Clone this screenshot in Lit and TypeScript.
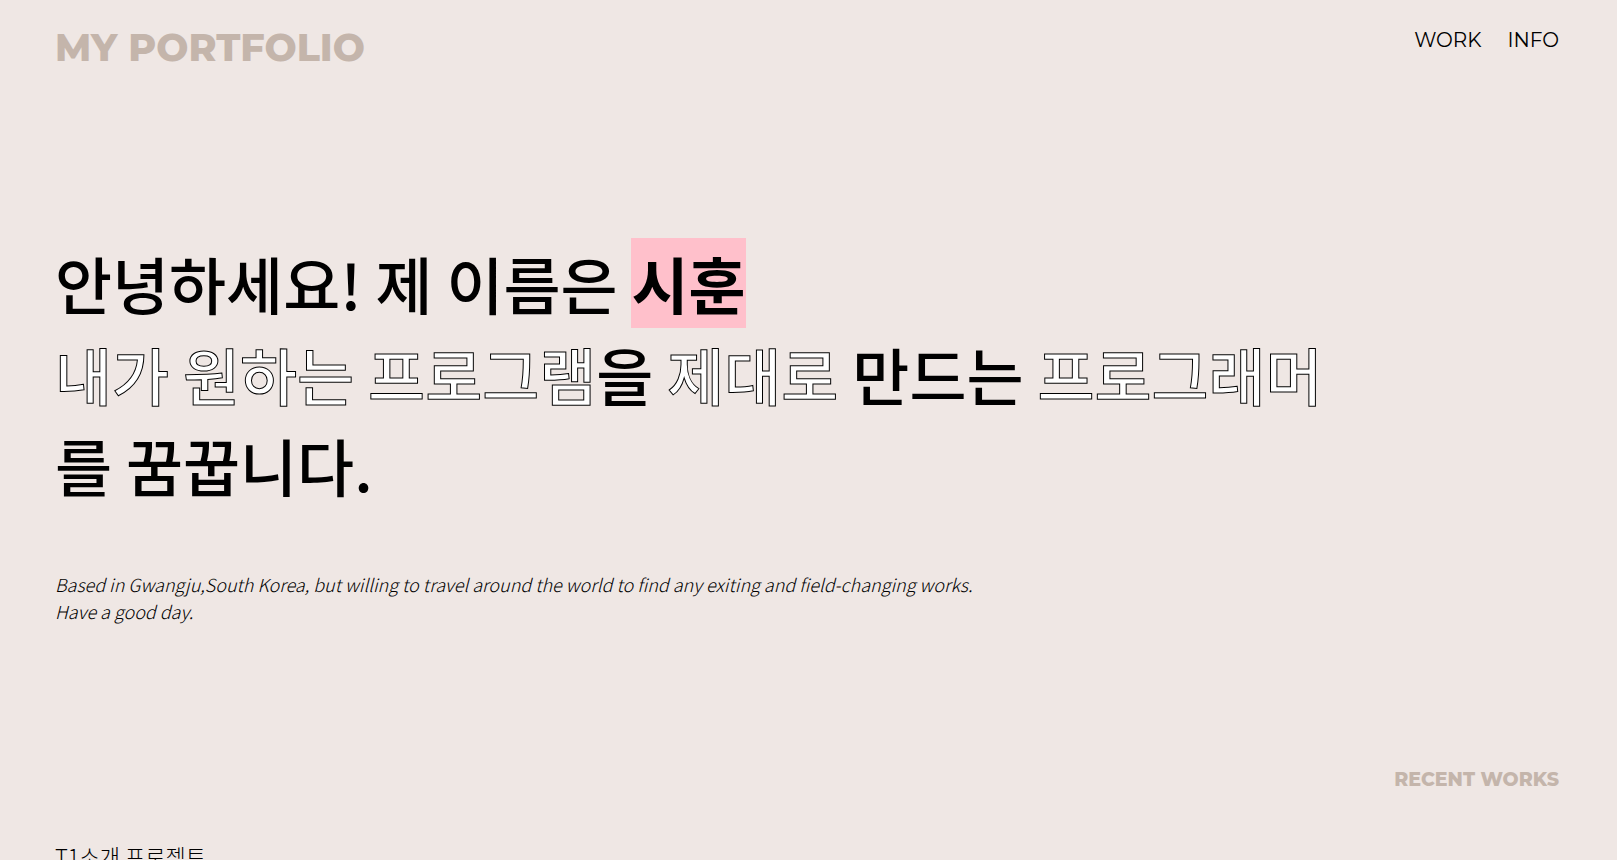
import { LitElement, html, css } from "lit";
import { customElement } from "lit/decorators.js";

@customElement("app-root")
class AppRoot extends LitElement {
  static styles = css`
    :host {
      display: block;
      height: 100vh;
      overflow: hidden;
      background: #efe7e4;
      color: #000;
      font-family: "Noto Sans CJK KR", sans-serif;
    }
    a { color: inherit; text-decoration: none; }
    h1, h2, h3, p { margin: 0; }
    header {
      display: flex;
      justify-content: space-between;
      align-items: flex-start;
      padding: 24px 58px 0 55px;
      font-family: Montserrat, Inter, sans-serif;
    }
    .logo { font-size: 38px; line-height: 48px; font-weight: 800; color: #c4b5ab; }
    nav { display: flex; gap: 26px; font-size: 20px; line-height: 32px; }
    .intro { padding: 166px 55px 0; }
    .headline { font-size: 62px; line-height: 91px; font-weight: 500; }
    mark { background: pink; color: inherit; font-weight: 700; }
    .outline { color: #fff; -webkit-text-stroke: 1px #000; }
    .lead { margin-top: 60px; font-size: 18px; line-height: 27px; font-weight: 300; font-style: italic; }
    .section-title { padding: 143px 58px 0; text-align: right; font: 800 19px/24px Montserrat, Inter, sans-serif; color: #c4b5ab; }
    .project { padding: 48px 55px 0; font-size: 22px; line-height: 30px; font-weight: 300; }
  `;
  render() {
    return html`
      <header>
        <a class="logo" href="#">MY PORTFOLIO</a>
        <nav><a href="#work">WORK</a><a href="#info">INFO</a></nav>
      </header>
      <main>
        <section class="intro">
          <h1 class="headline">안녕하세요! 제 이름은 <mark>시훈</mark><br /><span class="outline">내가 원하는 프로그램</span>을 <span class="outline">제대로</span> 만드는 <span class="outline">프로그래머</span><br />를 꿈꿉니다.</h1>
          <p class="lead">Based in Gwangju,South Korea, but willing to travel around the world to find any exiting and field-changing works.<br />Have a good day.</p>
        </section>
        <section id="work">
          <h2 class="section-title">RECENT WORKS</h2>
          <h3 class="project">T1소개 프로젝트</h3>
        </section>
      </main>
    `;
  }
}
